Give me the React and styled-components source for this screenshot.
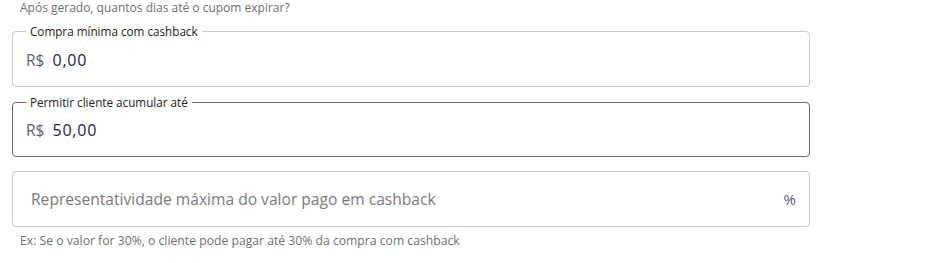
import React from "react";
import styled, { createGlobalStyle } from "styled-components";

const GlobalStyle = createGlobalStyle`
  body {
    margin: 0;
    background: #fff;
    font-family: "Open Sans", "Noto Sans", sans-serif;
  }
`;

const Page = styled.div`
  width: 798px;
  padding-left: 12px;
`;

const TopHint = styled.div`
  font-size: 12px;
  line-height: 15px;
  color: #6f6f6f;
  padding-left: 8px;
`;

const Field = styled.fieldset`
  margin: ${(p) => p.$top}px 0 0 0;
  padding: 0 13px;
  border: 1px solid ${(p) => (p.$active ? "#6a6a6a" : "#c9c9c9")};
  border-radius: 4px;
  height: ${(p) => p.$height}px;
  box-sizing: border-box;
  display: flex;
  align-items: center;
`;

const Legend = styled.legend`
  font-size: 11.7px;
  line-height: 12px;
  color: #222;
  padding: 0 4px;
  margin-left: 0;
`;

const Row = styled.div`
  display: flex;
  align-items: center;
  width: 100%;
  margin-top: ${(p) => p.$shift || 0}px;
`;

const Prefix = styled.span`
  font-size: 15.5px;
  color: #615d72;
  margin-right: 8px;
`;

const Value = styled.span`
  font-size: 16px;
  letter-spacing: 0.8px;
  color: #241a4f;
`;

const Placeholder = styled.span`
  flex: 1;
  font-size: 15.6px;
  color: #7a7a7a;
  padding-left: 5px;
`;

const Suffix = styled.span`
  font-size: 15px;
  color: #5e5572;
  margin-right: 0;
`;

const Hint = styled.div`
  font-size: 12.2px;
  line-height: 14px;
  color: #6f6f6f;
  padding-left: 8px;
  margin-top: 7px;
`;

export default function App() {
  return (
    <Page>
      <GlobalStyle />
      <TopHint>Após gerado, quantos dias até o cupom expirar?</TopHint>
      <Field $height={62} $top={10}>
        <Legend>Compra mínima com cashback</Legend>
        <Row $shift={-4}>
          <Prefix>R$</Prefix>
          <Value>0,00</Value>
        </Row>
      </Field>
      <Field $height={61} $active $top={9}>
        <Legend>Permitir cliente acumular até</Legend>
        <Row $shift={-4}>
          <Prefix>R$</Prefix>
          <Value>50,00</Value>
        </Row>
      </Field>
      <Field $height={56} $top={14}>
        <Row>
          <Placeholder>Representatividade máxima do valor pago em cashback</Placeholder>
          <Suffix>%</Suffix>
        </Row>
      </Field>
      <Hint>Ex: Se o valor for 30%, o cliente pode pagar até 30% da compra com cashback</Hint>
    </Page>
  );
}
